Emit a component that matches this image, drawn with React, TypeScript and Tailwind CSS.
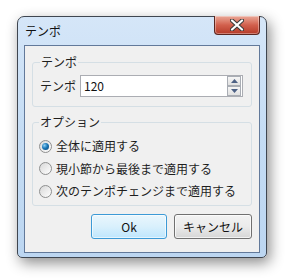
import React from 'react'

const FONT = { fontFamily: '"Noto Sans CJK JP", "Noto Sans", sans-serif' }

function CloseGlyph() {
  return (
    <svg width="14" height="12" viewBox="0 0 14 12">
      <path
        d="M2 1.5 L12 10.5 M12 1.5 L2 10.5"
        stroke="#3b3b3b"
        strokeWidth="4.2"
        strokeLinecap="round"
      />
      <path
        d="M2 1.5 L12 10.5 M12 1.5 L2 10.5"
        stroke="#ffffff"
        strokeWidth="2.2"
        strokeLinecap="round"
      />
    </svg>
  )
}

function Radio({ checked, label }: { checked?: boolean; label: string }) {
  return (
    <label className="flex h-[22.5px] items-center gap-[4px]">
      <span className="flex h-[13px] w-[13px] items-center justify-center rounded-full border border-[#8e8f8f] bg-gradient-to-br from-[#d8d8d8] to-[#ffffff]">
        {checked && (
          <span className="h-[7px] w-[7px] rounded-full bg-[radial-gradient(circle_at_35%_35%,#8fd0f5_0%,#1a78b8_45%,#0a3f6e_100%)]" />
        )}
      </span>
      <span className="text-[12px] text-[#1e1e1e]">{label}</span>
    </label>
  )
}

function SpinButton({ up }: { up?: boolean }) {
  return (
    <div className="flex h-[10px] w-[14px] items-center justify-center border border-[#a9adb4] bg-gradient-to-b from-[#f6f6f6] to-[#e1e1e1]">
      <svg width="7" height="4" viewBox="0 0 7 4">
        <path d={up ? 'M0 4 L3.5 0 L7 4 Z' : 'M0 0 L7 0 L3.5 4 Z'} fill="#4d6185" />
      </svg>
    </div>
  )
}

export default function App() {
  return (
    <div className="min-h-[280px] w-[288px] bg-white pl-[17px] pt-[16px]" style={FONT}>
      {/* Window frame */}
      <div className="flex h-[242px] w-[250px] flex-col rounded-t-[7px] rounded-b-[5px] border border-[#3f4650] bg-gradient-to-b from-[#d5e6f8] via-[#c4dcf4] to-[#bcd6f1] px-[6px] pb-[4px] shadow-[3px_5px_14px_rgba(0,0,0,0.45)]">
        {/* Title bar */}
        <div className="flex h-[28px] items-start justify-between">
          <span className="pl-[1px] pt-[5px] text-[12px] text-[#111]">テンポ</span>
          <div className="-mt-px flex h-[19px] w-[46px] items-center justify-center rounded-b-[4px] border border-t-0 border-[#5b2620] bg-gradient-to-b from-[#e9a898] via-[#d2604d] to-[#b53a28] shadow-[inset_0_0_0_1px_rgba(255,255,255,0.35)]">
            <CloseGlyph />
          </div>
        </div>

        {/* Client area */}
        <div className="flex flex-1 flex-col border border-[#62799a] bg-[#f0f0f0] px-[7px]">
          <fieldset className="mt-[8px] h-[53px] rounded-[3px] border border-[#d5dfe5] px-[7px]">
            <legend className="px-[1px] text-[12px] leading-[16px] text-[#1e1e1e]">テンポ</legend>
            <div className="mt-[5px] flex items-center">
              <span className="w-[40px] text-[12px] text-[#1e1e1e]">テンポ</span>
              <div className="flex h-[22px] w-[163px] items-center border border-[#abadb3] bg-white pr-px">
                <span className="flex-1 pl-[3px] text-[12px] text-[#111]">120</span>
                <div className="flex flex-col">
                  <SpinButton up />
                  <SpinButton />
                </div>
              </div>
            </div>
          </fieldset>

          <fieldset className="mt-[7px] h-[92px] rounded-[3px] border border-[#d5dfe5] px-[6px]">
            <legend className="px-[1px] text-[12px] leading-[16px] text-[#1e1e1e]">オプション</legend>
            <div className="mt-[5px] flex flex-col">
              <Radio checked label="全体に適用する" />
              <Radio label="現小節から最後まで適用する" />
              <Radio label="次のテンポチェンジまで適用する" />
            </div>
          </fieldset>

          <div className="mt-[8px] flex justify-end gap-[7px]">
            <button className="h-[25px] w-[76px] rounded-[3px] border border-[#3c9ad6] bg-gradient-to-b from-[#eaf6fd] via-[#d9f0fc] to-[#bee6fd] text-[12px] text-[#111] shadow-[inset_0_0_0_1px_rgba(255,255,255,0.6)]">
              Ok
            </button>
            <button className="h-[25px] w-[78px] rounded-[3px] border border-[#707070] bg-gradient-to-b from-[#f2f2f2] via-[#ebebeb] to-[#d6d6d6] text-[12px] text-[#111] shadow-[inset_0_0_0_1px_rgba(255,255,255,0.7)]">
              キャンセル
            </button>
          </div>
        </div>
      </div>
    </div>
  )
}
